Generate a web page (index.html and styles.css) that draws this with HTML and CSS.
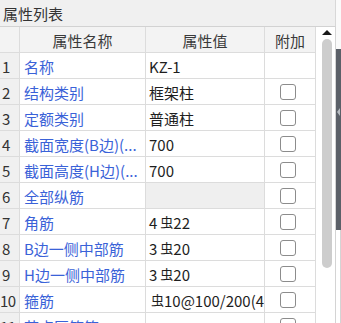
FILE: index.html
```html
<!DOCTYPE html>
<html lang="zh-CN">
<head>
<meta charset="utf-8">
<title>属性列表</title>
<link rel="stylesheet" href="styles.css">
</head>
<body>
<div class="app">
  <div class="panel">
    <div class="title">属性列表</div>
    <div class="body">
      <div class="grid">
        <div class="cell hd num"></div>
        <div class="cell hd center">属性名称</div>
        <div class="cell hd center">属性值</div>
        <div class="cell hd center">附加</div>

        <div class="cell num">1</div>
        <div class="cell name">名称</div>
        <div class="cell val">KZ-1</div>
        <div class="cell chk"></div>

        <div class="cell num">2</div>
        <div class="cell name">结构类别</div>
        <div class="cell val">框架柱</div>
        <div class="cell chk"><span class="box"></span></div>

        <div class="cell num">3</div>
        <div class="cell name">定额类别</div>
        <div class="cell val">普通柱</div>
        <div class="cell chk"><span class="box"></span></div>

        <div class="cell num">4</div>
        <div class="cell name">截面宽度(B边)(...</div>
        <div class="cell val">700</div>
        <div class="cell chk"><span class="box"></span></div>

        <div class="cell num">5</div>
        <div class="cell name">截面高度(H边)(...</div>
        <div class="cell val">700</div>
        <div class="cell chk"><span class="box"></span></div>

        <div class="cell num">6</div>
        <div class="cell name">全部纵筋</div>
        <div class="cell val disabled"></div>
        <div class="cell chk"><span class="box"></span></div>

        <div class="cell num">7</div>
        <div class="cell name">角筋</div>
        <div class="cell val">4<span class="rb">虫</span>22</div>
        <div class="cell chk"><span class="box"></span></div>

        <div class="cell num">8</div>
        <div class="cell name">B边一侧中部筋</div>
        <div class="cell val">3<span class="rb">虫</span>20</div>
        <div class="cell chk"><span class="box"></span></div>

        <div class="cell num">9</div>
        <div class="cell name">H边一侧中部筋</div>
        <div class="cell val">3<span class="rb">虫</span>20</div>
        <div class="cell chk"><span class="box"></span></div>

        <div class="cell num n2">10</div>
        <div class="cell name">箍筋</div>
        <div class="cell val"><span class="rb first">虫</span>10@100/200(4*4)</div>
        <div class="cell chk"><span class="box"></span></div>

        <div class="cell num n2">11</div>
        <div class="cell name">节点区箍筋</div>
        <div class="cell val"></div>
        <div class="cell chk"><span class="box"></span></div>
      </div>
      <div class="scroll">
        <div class="arrow-up"></div>
        <div class="thumb"></div>
      </div>
    </div>
  </div>
  <div class="side">
    <div class="dark"><span class="notch"></span></div>
    <div class="rest"></div>
  </div>
</div>
</body>
</html>
```

FILE: styles.css
```css
html, body {
  margin: 0;
  padding: 0;
  background: #ffffff;
}
body {
  width: 341px;
  height: 323px;
  overflow: hidden;
  font-family: "Noto Sans CJK SC", "Microsoft YaHei", sans-serif;
  font-size: 15px;
  color: #222222;
}
.app {
  display: flex;
  height: 323px;
}
.panel {
  width: 336px;
  display: flex;
  flex-direction: column;
  flex: none;
}
.title {
  height: 26px;
  line-height: 28px;
  padding-left: 3px;
  background: #f0f0f0;
  border-bottom: 1px solid #d2d2d2;
  border-right: 1px solid #d8d8d8;
  color: #333333;
  box-sizing: content-box;
  width: 332px;
  overflow: hidden;
}
.body {
  display: flex;
  flex: 1;
  min-height: 0;
}
.grid {
  width: 316px;
  display: grid;
  grid-template-columns: 20px 126px 119px 51px;
  grid-auto-rows: 26px;
  align-content: start;
}
.cell {
  box-sizing: border-box;
  border-right: 1px solid #dcdcdc;
  border-bottom: 1px solid #dcdcdc;
  line-height: 28px;
  height: 26px;
  white-space: nowrap;
  overflow: hidden;
}
.hd {
  background: #f3f3f3;
  color: #3a3a3a;
}
.center {
  text-align: center;
}
.num {
  background: #f0f0f0;
  padding-left: 2px;
  color: #333333;
}
.num.n2 {
  padding-left: 0;
  letter-spacing: -0.5px;
}
.hd.num {
  background: #f3f3f3;
}
.name {
  padding-left: 4px;
  color: #3a62d8;
}
.val {
  padding-left: 3px;
  color: #1e1e1e;
}
.val.disabled {
  background: #efefef;
}
.rb {
  font-size: 13px;
  position: relative;
  top: -2px;
  margin-left: 3px;
}
.rb.first {
  margin-left: 2px;
}
.chk {
  display: flex;
  align-items: center;
  justify-content: center;
  padding-right: 5px;
}
.box {
  width: 14px;
  height: 14px;
  border: 1.5px solid #8c8c8c;
  border-radius: 3px;
  background: #ffffff;
}
.scroll {
  width: 20px;
  box-sizing: border-box;
  border-right: 1px solid #d4d4d4;
  display: flex;
  flex-direction: column;
  align-items: center;
  padding-left: 2px;
}
.arrow-up {
  margin-top: 3px;
  width: 0;
  height: 0;
  border-left: 5px solid transparent;
  border-right: 5px solid transparent;
  border-bottom: 5px solid #1a1a1a;
}
.thumb {
  margin-top: 4px;
  width: 10px;
  height: 229px;
  border-radius: 5px;
  background: #cdcdcd;
}
.side {
  width: 5px;
  display: flex;
  flex-direction: column;
  padding-top: 49px;
  background: #fafafa;
}
.dark {
  height: 181px;
  background: #5b6068;
  display: flex;
  flex-direction: column;
}
.notch {
  margin-top: 59px;
  width: 0;
  height: 0;
  border-top: 4px solid transparent;
  border-bottom: 4px solid transparent;
  border-right: 3px solid #b8bcc2;
  margin-left: 1px;
}
.rest {
  flex: 1;
  box-sizing: border-box;
  border-right: 1px solid #d4d4d4;
  background: #ffffff;
}
```
